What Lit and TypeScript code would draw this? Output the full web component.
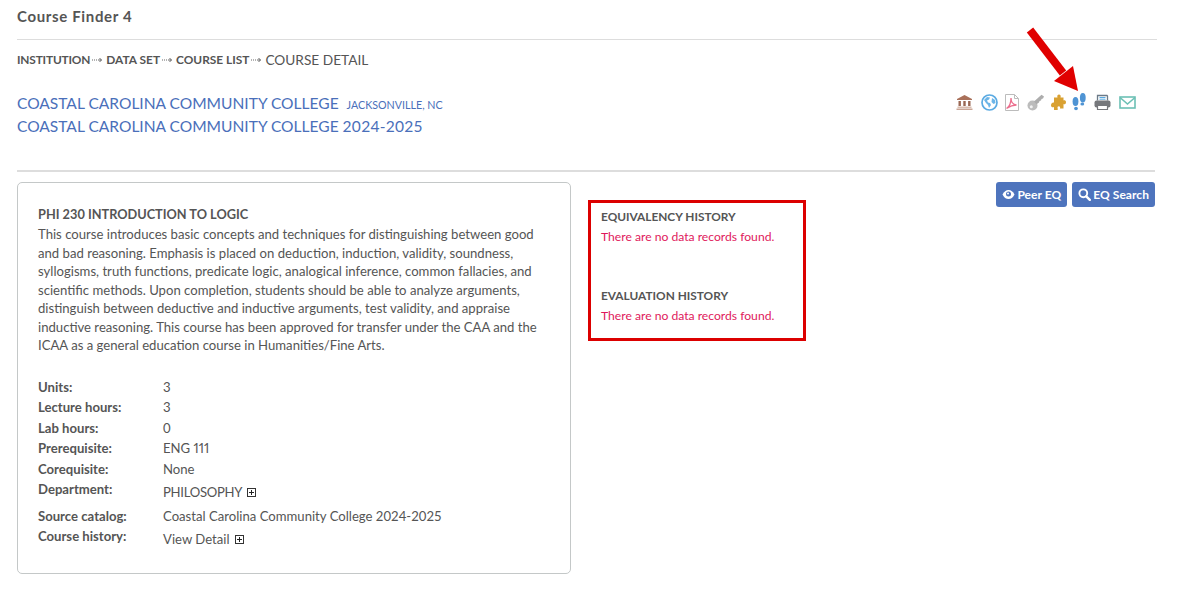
import { LitElement, html, css, svg } from "lit";
import { customElement } from "lit/decorators.js";

const rows: [string, string, boolean?, string?][] = [
  ["Units:", "3"],
  ["Lecture hours:", "3"],
  ["Lab hours:", "0"],
  ["Prerequisite:", "ENG 111", false, "pn"],
  ["Corequisite:", "None"],
  ["Department:", "PHILOSOPHY", true, "tall tight"],
  ["Source catalog:", "Coastal Carolina Community College 2024-2025"],
  ["Course history:", "View Detail", true, "tall"],
];

const descLines = [
  "This course introduces basic concepts and techniques for distinguishing between good",
  "and bad reasoning. Emphasis is placed on deduction, induction, validity, soundness,",
  "syllogisms, truth functions, predicate logic, analogical inference, common fallacies, and",
  "scientific methods. Upon completion, students should be able to analyze arguments,",
  "distinguish between deductive and inductive arguments, test validity, and appraise",
  "inductive reasoning. This course has been approved for transfer under the CAA and the",
  "ICAA as a general education course in Humanities/Fine Arts.",
];

const arrowSep = html`<svg class="sep" width="11" height="6" viewBox="0 0 11 6"><path d="M0 3h1M2 3h1M4 3h1M6 3h3.500M7.500 1l2 2-2 2" fill="none" stroke="#666" stroke-width="1"/></svg>`;

const icons = [
  svg`<svg width="19" height="17" viewBox="0 0 19 17"><path d="M8.500 1 16 5v1H1V5z" fill="#a9705a"/><path d="M2.500 7h2.400v5H2.500zM7.300 7h2.400v5H7.300zM12.100 7h2.400v5h-2.400z" fill="#9a6753"/><path d="M1.500 12.500h14V14h-14z" fill="#d9bcaf"/><path d="M.5 14.500h16V16H.5z" fill="#c9a595"/></svg>`,
  svg`<svg width="18" height="17" viewBox="0 0 18 17"><circle cx="8.500" cy="8.500" r="7.500" fill="#fff" stroke="#5aaae2" stroke-width="1.700"/><path d="M3 6l3-3 3 .5-1 2-2 1 1 2 2 .5 1 2-2 3-1-3-2-2zM11 4l3 2 .5 3-2 1-2-2z" fill="#6cb5e8"/></svg>`,
  svg`<svg width="16" height="17" viewBox="0 0 16 17"><path d="M.5.5h9l4 4v12H.5z" fill="#fff" stroke="#bcbcbc"/><path d="M9.500.5v4h4" fill="none" stroke="#bcbcbc"/><path d="M1.500 14.500c2.500-1.500 4.500-6 4.500-10.500 0 4 2 6.500 5.500 7-3.500 0-7 1.500-10 3.500z" fill="none" stroke="#ec6f8e" stroke-width="1.300"/></svg>`,
  svg`<svg width="18" height="17" viewBox="0 0 18 17"><circle cx="5.500" cy="11.500" r="5" fill="#bcbcbc"/><circle cx="4.300" cy="12.700" r="1.500" fill="#f2f2f2"/><path d="M7 7.500 14.500 .8l2.500 1.700-1 2-1.500.5-.5 1.500-1.500.5-.5 1.500-2.500 1.800z" fill="#adadad"/></svg>`,
  svg`<svg width="15" height="17" viewBox="0 0 15 17"><path d="M3 3.500h3.500C5.800 1.500 6.800.5 8 .5s2.200 1 1.500 3H12.500V6.500c1-.5 2.500 0 2.500 1.800s-1.500 2.400-2.500 1.800v4.400H9c.5-1.400-.2-2.200-1.200-2.200S6.200 13.200 6.700 14.500v1.500H3v-3c-1.300.6-3 .2-3-1.800S1.700 8 3 8.500z" fill="#d9a132"/></svg>`,
  svg`<svg width="16" height="18" viewBox="0 0 16 18"><ellipse cx="10.800" cy="4.800" rx="2.900" ry="4.800" fill="#4f94d4"/><ellipse cx="10.300" cy="11" rx="1.900" ry="1.500" fill="#4f94d4"/><ellipse cx="3.500" cy="8.500" rx="2.900" ry="4.500" fill="#4f94d4"/><ellipse cx="4" cy="15.500" rx="1.900" ry="1.700" fill="#4f94d4"/></svg>`,
  svg`<svg width="19" height="17" viewBox="0 0 19 17"><path d="M3.500 6.500V1.500h9.500L13.500 2V6.500" fill="#fff" stroke="#6b7a88" stroke-width="1.300"/><path d="M5.500 3.500h6M5.500 5.200h6" stroke="#5aaae2"/><rect x=".5" y="6.500" width="16" height="7" rx="2" fill="#76787c"/><path d="M3.500 11.500h10V15.500h-10z" fill="#fff" stroke="#76787c" stroke-width="1.200"/></svg>`,
  svg`<svg width="17" height="13" viewBox="0 0 17 13"><rect x="1" y="1" width="15" height="11" fill="#fff" stroke="#6cc0b5" stroke-width="1.600"/><path d="M1 1.500 8.500 8 16 1.500" fill="none" stroke="#6cc0b5" stroke-width="1.600"/></svg>`,
];

@customElement("app-root")
export class AppRoot extends LitElement {
  static styles = css`
    :host {
      display: block;
      position: relative;
      width: 1198px;
      height: 594px;
      overflow: hidden;
      background: #fff;
      font-family: Lato, "Open Sans", sans-serif;
      font-size: 13.130px;
      color: #555;
      box-sizing: border-box;
      padding: 0 41px 0 17px;
    }
    .app-title {
      height: 39px;
      line-height: 33px;
      font-size: 15px;
      letter-spacing: 0.650px;
      font-weight: 700;
      color: #555;
      border-bottom: 1px solid #ddd;
    }
    .crumbs {
      height: 39px;
      display: flex;
      align-items: center;
      font-size: 11.900px;
      font-weight: 700;
      white-space: nowrap;
    }
    .sep { margin: 0 3px 0 2px; }
    .crumbs .first { letter-spacing: -0.180px; }
    .crumbs .cur { font-weight: 400; font-size: 13.700px; }
    .head {
      height: 93px;
      display: flex;
      justify-content: space-between;
      align-items: flex-start;
      border-bottom: 2px solid #ddd;
      margin-right: 2px;
      padding-top: 13px;
      box-sizing: border-box;
    }
    .titles { color: #4a6fba; font-size: 15.550px; line-height: 22.500px; white-space: nowrap; }
    .titles small { font-size: 10.700px; margin-left: 4px; line-height: 0; }
    .titles .year { letter-spacing: 0.250px; }
    .icons { display: flex; align-items: center; gap: 6px; margin-right: 19px; height: 20px; }
    .icons svg { display: block; flex: none; }
    .main { display: flex; align-items: flex-start; margin-top: 10px; margin-right: 2px; }
    .card {
      width: 554px;
      height: 392px;
      flex: none;
      box-sizing: border-box;
      border: 1px solid #c4c8c8;
      border-radius: 5px;
      padding: 20px 20px 0;
    }
    .card h3 { margin: 0; font-size: 12.750px; line-height: 22px; font-weight: 700; color: #555; }
    .desc { line-height: 18.500px; white-space: nowrap; }
    .facts { margin-top: 22px; display: grid; grid-template-columns: 125px 1fr; }
    .k { font-weight: 700; line-height: 20.500px; }
    .v { line-height: 20.500px; display: flex; align-items: center; gap: 5px; }
    .tall { padding-top: 3px; padding-bottom: 3px; }
    .tight { letter-spacing: -0.300px; }
    .pn { font-variant-numeric: proportional-nums; }
    .plus {
      width: 9px;
      height: 9px;
      flex: none;
      border: 1px solid #333;
      box-sizing: border-box;
      position: relative;
    }
    .plus::before { content: ""; position: absolute; left: 1px; right: 1px; top: 3px; height: 1px; background: #222; }
    .plus::after { content: ""; position: absolute; top: 1px; bottom: 1px; left: 3px; width: 1px; background: #222; }
    .hist {
      width: 218px;
      height: 141px;
      flex: none;
      margin: 18px 0 0 17px;
      box-sizing: border-box;
      border: 3px solid #dc0000;
      padding: 5px 10px;
      font-size: 12.150px;
    }
    .hist h4 { margin: 0; font-size: 11.850px; font-weight: 700; line-height: 18px; color: #555; }
    .hist p { margin: 2px 0 0; line-height: 18px; color: #e0195c; }
    .hist h4.second { margin-top: 41px; }
    .btns { margin-left: auto; display: flex; gap: 5px; }
    .btn {
      height: 25px;
      display: flex;
      align-items: center;
      gap: 2px;
      box-sizing: border-box;
      padding: 0 6px;
      background: #4e74bd;
      color: #fff;
      border-radius: 3px;
      font-size: 12px;
      letter-spacing: 0.050px;
      font-weight: 700;
      white-space: nowrap;
    }
    .arrow { position: absolute; left: 1020px; top: 22px; }
  `;

  render() {
    return html`
      <div class="app-title">Course Finder 4</div>
      <div class="crumbs">
        <span class="first">INSTITUTION</span>${arrowSep}<span>DATA SET</span>${arrowSep}<span>COURSE LIST</span>${arrowSep}<span class="cur">COURSE DETAIL</span>
      </div>
      <div class="head">
        <div class="titles">
          <div>COASTAL CAROLINA COMMUNITY COLLEGE <small>JACKSONVILLE, NC</small></div>
          <div>COASTAL CAROLINA COMMUNITY COLLEGE <span class="year">2024-2025</span></div>
        </div>
        <div class="icons">${icons}</div>
      </div>
      <div class="main">
        <div class="card">
          <h3>PHI 230 INTRODUCTION TO LOGIC</h3>
          <div class="desc">${descLines.map((l) => html`<div>${l}</div>`)}</div>
          <div class="facts">
            ${rows.map(
              ([k, v, plus, cls]) => html`
                <div class="k">${k}</div>
                <div class="v ${cls ?? ""}">${v}${plus ? html`<span class="plus"></span>` : ""}</div>
              `,
            )}
          </div>
        </div>
        <div class="hist">
          <h4>EQUIVALENCY HISTORY</h4>
          <p>There are no data records found.</p>
          <h4 class="second">EVALUATION HISTORY</h4>
          <p>There are no data records found.</p>
        </div>
        <div class="btns">
          <div class="btn">
            <svg width="13" height="11" viewBox="0 0 13 11"><path d="M.5 5.500C2 2.500 4 1 6.500 1S11 2.500 12.500 5.500C11 8.500 9 10 6.500 10S2 8.500 .5 5.500z" fill="#fff"/><circle cx="6.500" cy="5" r="2.500" fill="#4e74bd"/><circle cx="6" cy="4.500" r="1" fill="#fff"/></svg>
            Peer EQ
          </div>
          <div class="btn">
            <svg width="13" height="13" viewBox="0 0 13 13"><circle cx="5.300" cy="5.300" r="3.900" fill="none" stroke="#fff" stroke-width="1.900"/><path d="M8.300 8.300 11.800 11.800" stroke="#fff" stroke-width="2.400" stroke-linecap="round"/></svg>
            EQ Search
          </div>
        </div>
      </div>
      <svg class="arrow" width="66" height="74" viewBox="0 0 66 74">
        <path d="M10 8 43 51" stroke="#e00000" stroke-width="8" fill="none"/>
        <path d="M58 69 34 59 53 44z" fill="#e00000"/>
      </svg>
    `;
  }
}
